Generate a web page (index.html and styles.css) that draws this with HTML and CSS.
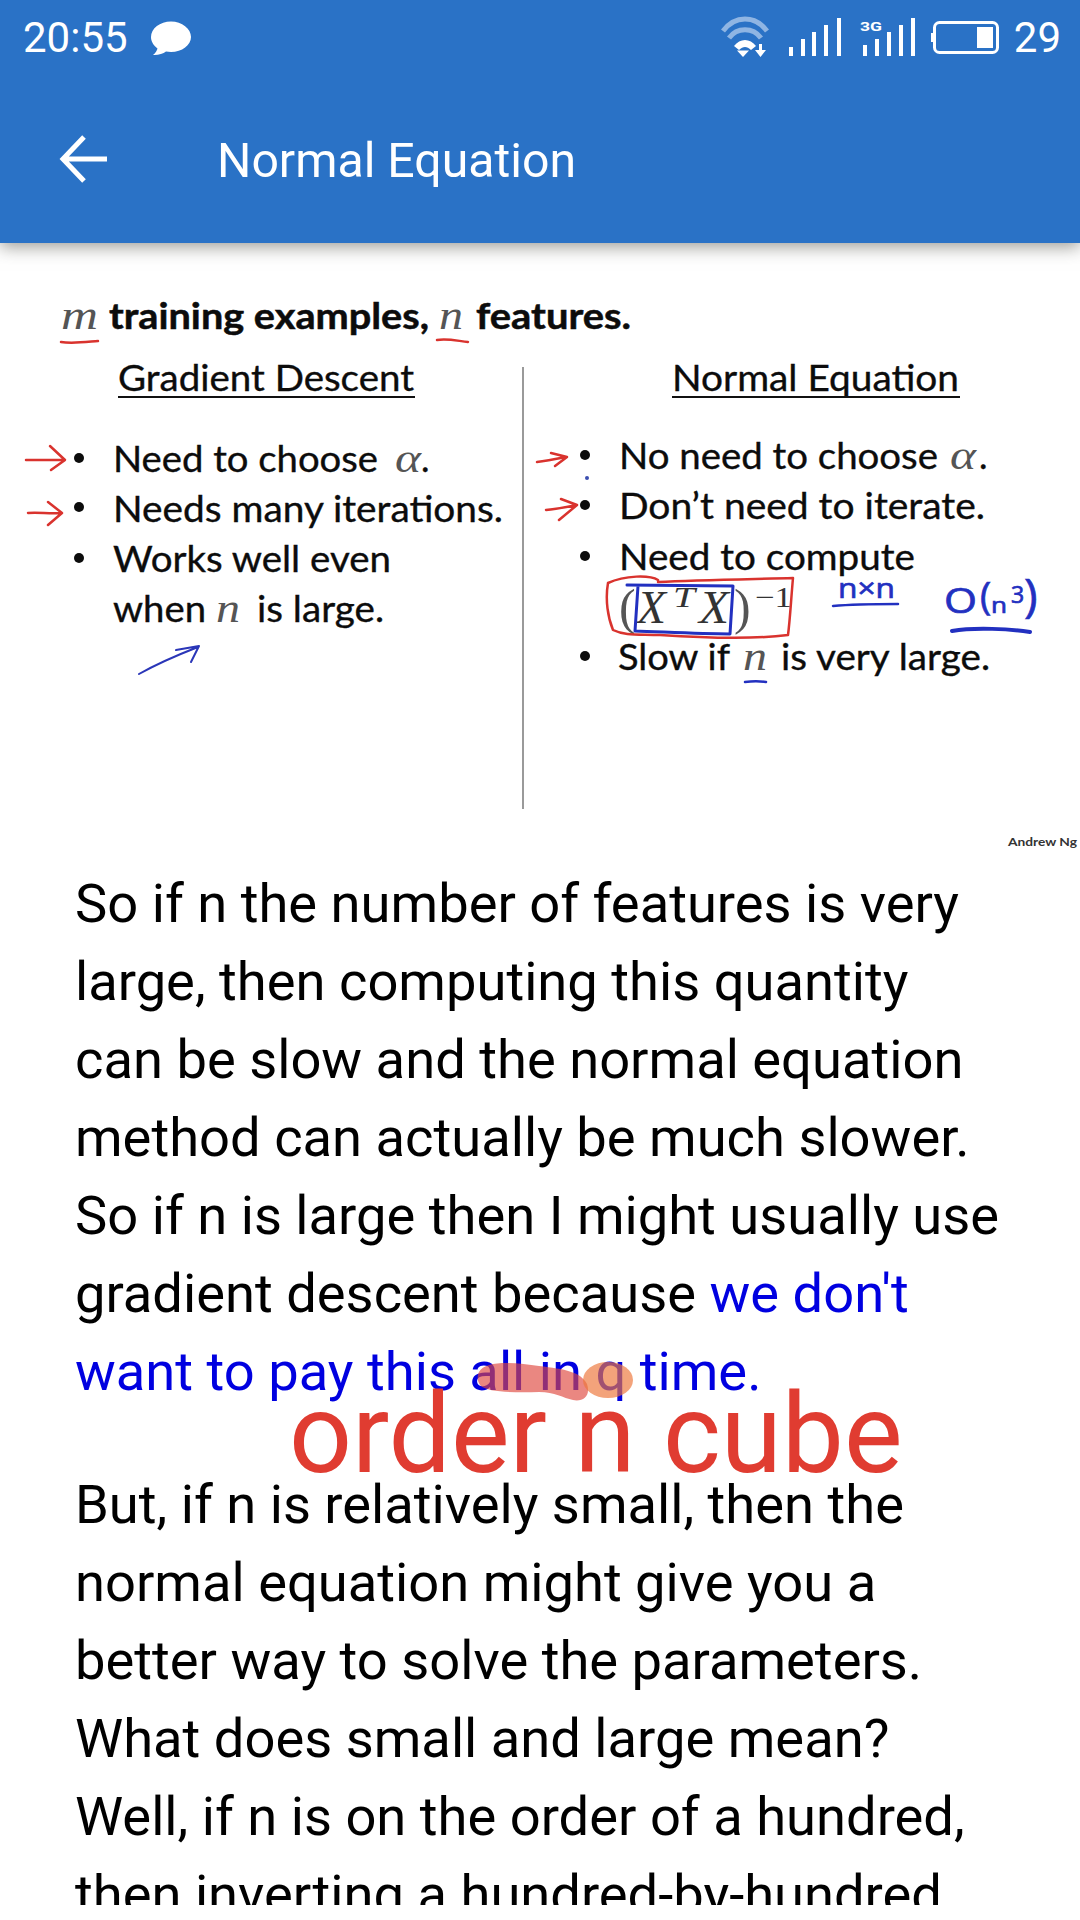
FILE: index.html
```html
<!DOCTYPE html>
<html lang="en">
<head>
<meta charset="utf-8">
<title>Normal Equation</title>
<link rel="stylesheet" href="styles.css">
</head>
<body>
<div class="screen">
  <header class="header">
    <div class="status">
      <div class="status-left">
        <span class="status-text">20:55</span>
        <svg class="bubble" width="42" height="36" viewBox="0 0 42 36"><path class="fill-white" d="M21 1.500C10 1.500 1 8.500 1 17c0 4.500 2.500 8.500 6.500 11.500C7 30.500 5.500 33 3 35c5 .3 10-1 13-3.500 1.600.3 3.300.5 5 .5 11 0 20-6.800 20-15S32 1.500 21 1.500z"/></svg>
      </div>
      <div class="status-right">
        <svg class="status-icons" width="290" height="75" viewBox="722 0 290 75">
          <path class="wifi-dim" d="M724 31C736 15 756 15 768 31"/>
          <path class="wifi-dim" d="M730 38C738 27 754 27 762 38"/>
          <path class="fill-white" d="M735 46C741 38 751 38 757 46L752 50C748 46 744 46 740 50z"/>
          <path class="fill-white" d="M738 50.500h12L744 57z"/>
          <path class="fill-white" d="M760 44h3v6h4l-5.500 7-5.500-7h4z"/>
          <g class="fill-white">
            <rect x="790" y="47" width="4" height="9"/>
            <rect x="802" y="39" width="4" height="17"/>
            <rect x="813" y="32" width="4" height="24"/>
            <rect x="825" y="25" width="4" height="31"/>
            <rect x="838" y="18" width="4" height="38"/>
            <rect x="864" y="45" width="4" height="11"/>
            <rect x="876" y="39" width="4" height="17"/>
            <rect x="888" y="32" width="4" height="24"/>
            <rect x="900" y="25" width="4" height="31"/>
            <rect x="912" y="18" width="4" height="38"/>
          </g>
          <text class="net-label" x="861" y="31" textLength="22" lengthAdjust="spacingAndGlyphs">3G</text>
          <rect class="battery" x="935.500" y="22.500" width="63" height="30" rx="5"/>
          <rect class="fill-white" x="932" y="33" width="2" height="9"/>
          <rect class="fill-white" x="978" y="27" width="16" height="21"/>
        </svg>
        <span class="status-text">29</span>
      </div>
    </div>
    <div class="toolbar">
      <svg class="back" width="52" height="52" viewBox="0 0 52 52"><path class="back-stroke" d="M49 26H6M26 4L5 26l21 22"/></svg>
      <h1 class="title">Normal Equation</h1>
    </div>
  </header>

  <main class="content">
    <svg class="slide" width="1080" height="612" viewBox="0 243 1080 612">
      <text class="math" x="61" y="329" textLength="37" lengthAdjust="spacingAndGlyphs">m</text>
      <text class="slide-bold" x="109" y="329" textLength="320" lengthAdjust="spacingAndGlyphs">training examples,</text>
      <text class="math" x="439" y="329" textLength="24" lengthAdjust="spacingAndGlyphs">n</text>
      <text class="slide-bold" x="476" y="329" textLength="155" lengthAdjust="spacingAndGlyphs">features.</text>
      <path class="ink-red" d="M61 342C72 344 86 342 98 341"/>
      <path class="ink-red" d="M437 340C447 338 458 341 468 342"/>

      <text class="slide-text" x="118" y="391" textLength="296" lengthAdjust="spacingAndGlyphs">Gradient Descent</text>
      <rect class="rule" x="118" y="396" width="297" height="2"/>
      <text class="slide-text" x="672" y="391" textLength="287" lengthAdjust="spacingAndGlyphs">Normal Equation</text>
      <rect class="rule" x="672" y="396" width="288" height="2"/>
      <rect class="divider" x="522" y="367" width="2" height="442"/>

      <g class="dots">
        <circle cx="79" cy="458" r="5"/><circle cx="79" cy="507" r="5"/><circle cx="79" cy="558" r="5"/>
        <circle cx="585" cy="455" r="5"/><circle cx="585" cy="505" r="5"/><circle cx="585" cy="556" r="5"/><circle cx="585" cy="656" r="5"/>
      </g>
      <circle class="speck" cx="587" cy="478" r="2"/>

      <text class="slide-text" x="113" y="472" textLength="265" lengthAdjust="spacingAndGlyphs">Need to choose</text>
      <text class="math" x="395" y="472" textLength="26" lengthAdjust="spacingAndGlyphs">α</text>
      <text class="slide-text" x="421" y="472">.</text>
      <text class="slide-text" x="113" y="522" textLength="390" lengthAdjust="spacingAndGlyphs">Needs many iterations.</text>
      <text class="slide-text" x="113" y="572" textLength="278" lengthAdjust="spacingAndGlyphs">Works well even</text>
      <text class="slide-text" x="113" y="622" textLength="93" lengthAdjust="spacingAndGlyphs">when</text>
      <text class="math" x="216" y="622" textLength="24" lengthAdjust="spacingAndGlyphs">n</text>
      <text class="slide-text" x="257" y="622" textLength="127" lengthAdjust="spacingAndGlyphs">is large.</text>

      <text class="slide-text" x="619" y="469" textLength="319" lengthAdjust="spacingAndGlyphs">No need to choose</text>
      <text class="math" x="950" y="469" textLength="26" lengthAdjust="spacingAndGlyphs">α</text>
      <text class="slide-text" x="979" y="469">.</text>
      <text class="slide-text" x="619" y="519" textLength="366" lengthAdjust="spacingAndGlyphs">Don’t need to iterate.</text>
      <text class="slide-text" x="619" y="570" textLength="296" lengthAdjust="spacingAndGlyphs">Need to compute</text>
      <text class="slide-text" x="618" y="670" textLength="112" lengthAdjust="spacingAndGlyphs">Slow if</text>
      <text class="math" x="743" y="670" textLength="24" lengthAdjust="spacingAndGlyphs">n</text>
      <text class="slide-text" x="781" y="670" textLength="209" lengthAdjust="spacingAndGlyphs">is very large.</text>

      <text class="formula-paren" x="619" y="624">(</text>
      <text class="formula-i" x="637" y="623" textLength="29" lengthAdjust="spacingAndGlyphs">X</text>
      <text class="formula-sup" x="673" y="607" textLength="22" lengthAdjust="spacingAndGlyphs">T</text>
      <text class="formula-i" x="699" y="623" textLength="30" lengthAdjust="spacingAndGlyphs">X</text>
      <text class="formula-paren" x="734" y="624">)</text>
      <text class="formula-exp" x="755" y="607" textLength="37" lengthAdjust="spacingAndGlyphs">−1</text>

      <path class="ink-red" d="M658 580C650 575 625 575 608 583C605 600 608 618 613 630C625 636 640 634 660 635C690 637 750 640 788 635C790 620 791 600 793 578C760 579 700 580 658 582"/>
      <path class="ink-blue-box" d="M627 585L733 586C732 600 731 620 730 634C700 634 665 632 635 631C636 615 637 600 638 586"/>
      <text class="hand-small" x="838" y="598" textLength="57" lengthAdjust="spacingAndGlyphs">n×n</text>
      <path class="ink-blue" d="M833 606C855 604 878 604 898 604"/>
      <text class="hand-big" x="944" y="613" textLength="33" lengthAdjust="spacingAndGlyphs">O</text>
      <text class="hand-paren" x="980" y="610">(</text>
      <text class="hand-n" x="991" y="613" textLength="16" lengthAdjust="spacingAndGlyphs">n</text>
      <text class="hand-sup" x="1011" y="603">3</text>
      <text class="hand-paren-big" x="1024" y="612">)</text>
      <path class="ink-blue-thick" d="M952 631C975 627 1010 629 1030 632"/>
      <path class="ink-blue" d="M745 682C752 681 760 681 766 682"/>

      <path class="ink-red" d="M26 460H64M50 446L65 460L51 470"/>
      <path class="ink-red" d="M28 513C38 512 50 514 61 513M48 502L62 513L48 525"/>
      <path class="ink-red" d="M537 462C546 461 556 459 566 457M551 453L567 457L555 466"/>
      <path class="ink-red" d="M546 510C556 509 567 507 577 505M561 499L577 505L559 520"/>
      <path class="ink-blue-thin" d="M139 674C155 665 175 656 198 647M176 650L199 646L191 662"/>

      <text class="credit" x="1008" y="846" textLength="69" lengthAdjust="spacingAndGlyphs">Andrew Ng</text>
    </svg>

    <article class="article">
      <p class="para">So if n the number of features is very large, then computing this quantity can be slow and the normal equation method can actually be much slower. So if n is large then I might usually use gradient descent because <span class="highlight">we don't want to pay this all in q time.</span></p>
      <p class="para">But, if n is relatively small, then the normal equation might give you a better way to solve the parameters. What does small and large mean? Well, if n is on the order of a hundred, then inverting a hundred-by-hundred</p>
    </article>
  </main>

  <svg class="marks" width="170" height="44" viewBox="0 0 170 44"><path class="mark-pink" d="M4 12C10 0 40 2 64 6C90 9 106 12 112 24C116 36 108 42 98 40C88 38 80 32 64 32C40 33 12 32 6 26C2 22 2 16 4 12z"/><ellipse class="mark-orange" cx="133" cy="20" rx="25" ry="18"/></svg>
  <div class="caption">order n cube</div>
</div>
</body>
</html>
```

FILE: styles.css
```css
html, body {
  margin: 0;
  padding: 0;
  background: #fff;
}

.screen {
  position: relative;
  width: 1080px;
  height: 1920px;
  overflow: hidden;
  background: #fff;
  font-family: Roboto, "Liberation Sans", sans-serif;
}

.header {
  position: relative;
  z-index: 2;
  display: flex;
  flex-direction: column;
  height: 243px;
  background: #2a72c6;
  color: #fff;
  box-shadow: 0 4px 16px rgba(60, 60, 50, 0.5);
}

.status {
  display: flex;
  justify-content: space-between;
  align-items: center;
  height: 75px;
  padding: 0 19px 0 23px;
}

.status-left {
  display: flex;
  align-items: center;
  gap: 22px;
}

.status-right {
  display: flex;
  align-items: center;
  gap: 3px;
}

.status-text {
  font-size: 42px;
  line-height: 75px;
  font-weight: 400;
}

.status-icons,
.bubble,
.back {
  display: block;
  flex: none;
}

.fill-white { fill: #fff; }

.wifi-dim {
  fill: none;
  stroke: #8fb5e3;
  stroke-width: 5;
}

.net-label {
  font-family: Roboto, sans-serif;
  font-size: 13px;
  font-weight: 700;
  fill: #fff;
}

.battery {
  fill: none;
  stroke: #fff;
  stroke-width: 3;
}

.toolbar {
  display: flex;
  align-items: center;
  height: 168px;
  padding-left: 58px;
  gap: 107px;
}

.back-stroke {
  fill: none;
  stroke: #fff;
  stroke-width: 5;
}

.title {
  margin: 3px 0 0;
  font-size: 48.200px;
  font-weight: 400;
  line-height: 56px;
}

.content {
  display: flex;
  flex-direction: column;
  height: 1662px;
  overflow: hidden;
}

.slide {
  display: block;
  flex: none;
}

.slide-text {
  font-family: Lato, sans-serif;
  font-size: 36px;
  fill: #0c0c0c;
  stroke: #0c0c0c;
  stroke-width: 0.35;
}

.slide-bold {
  font-family: Lato, sans-serif;
  font-size: 36px;
  font-weight: 700;
  fill: #0c0c0c;
  stroke: #0c0c0c;
  stroke-width: 0.5;
}

.math {
  font-family: "Liberation Serif", serif;
  font-style: italic;
  font-size: 40px;
  fill: #555;
}

.formula-paren,
.formula-i,
.formula-sup,
.formula-exp {
  font-family: "Liberation Serif", serif;
  fill: #333;
}

.formula-paren { font-size: 50px; font-weight: 400; fill: #555; }
.formula-i { font-size: 46px; font-style: italic; }
.formula-sup { font-size: 29px; font-style: italic; }
.formula-exp { font-size: 29px; }

.rule { fill: #111; }
.divider { fill: #9a9a9a; }
.dots { fill: #0c0c0c; }
.speck { fill: #3c4fb0; }

.ink-red,
.ink-blue,
.ink-blue-box,
.ink-blue-thick,
.ink-blue-thin {
  fill: none;
  stroke-linecap: round;
  stroke-linejoin: round;
}

.ink-red { stroke: #d9332e; stroke-width: 2.500; }
.ink-blue { stroke: #2230c0; stroke-width: 2.500; }
.ink-blue-box { stroke: #2230c0; stroke-width: 3; }
.ink-blue-thick { stroke: #2230c0; stroke-width: 4; }
.ink-blue-thin { stroke: #2a36b8; stroke-width: 2; }

.hand-small,
.hand-big,
.hand-paren,
.hand-paren-big,
.hand-n,
.hand-sup {
  font-family: "Open Sans", sans-serif;
  fill: #2230c0;
  stroke: #2230c0;
  stroke-width: 0.7;
}

.hand-small { font-size: 28px; }
.hand-big { font-size: 34px; }
.hand-paren { font-size: 38px; }
.hand-paren-big { font-size: 46px; }
.hand-n { font-size: 22px; }
.hand-sup { font-size: 23px; }

.credit {
  font-family: Lato, sans-serif;
  font-size: 12px;
  font-weight: 700;
  fill: #333;
}

.article {
  padding: 10px 77px 0 75px;
}

.para {
  margin: 0 0 55px;
  font-size: 54.300px;
  line-height: 78px;
  color: #000;
}

.highlight { color: #0000e0; }

.marks {
  position: absolute;
  left: 475px;
  top: 1360px;
}

.mark-pink { fill: rgba(222, 70, 62, 0.65); }
.mark-orange { fill: rgba(238, 120, 60, 0.68); }

.caption {
  position: absolute;
  left: 289px;
  top: 1368px;
  font-size: 110.600px;
  line-height: 132px;
  color: #e03c31;
  white-space: nowrap;
}
```
